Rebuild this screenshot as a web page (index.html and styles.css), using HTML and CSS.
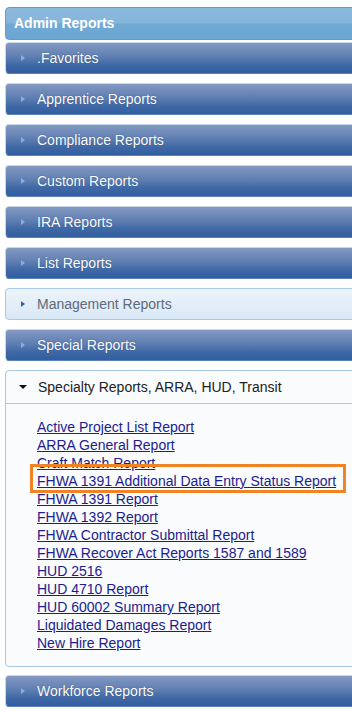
FILE: index.html
```html
<!DOCTYPE html>
<html lang="en">
  <head>
    <meta charset="UTF-8" />
    <meta name="viewport" content="width=device-width, initial-scale=1.0" />
    <title>Admin Reports</title>
    <link rel="stylesheet" href="styles.css">
  </head>
  <body>
    <!-- menu báo cáo -->
    <div class="menu">
      <div class="title">Admin Reports</div>
      <div class="list">
        <div class="bar"><span class="arrow"></span>.Favorites</div>
        <div class="bar"><span class="arrow"></span>Apprentice Reports</div>
        <div class="bar"><span class="arrow"></span>Compliance Reports</div>
        <div class="bar"><span class="arrow"></span>Custom Reports</div>
        <div class="bar"><span class="arrow"></span>IRA Reports</div>
        <div class="bar"><span class="arrow"></span>List Reports</div>
        <div class="bar light"><span class="arrow"></span>Management Reports</div>
        <div class="bar"><span class="arrow"></span>Special Reports</div>
        <div class="open">
          <div class="openHead"><span class="down"></span>Specialty Reports, ARRA, HUD, Transit</div>
          <div class="links">
            <a href="#">Active Project List Report</a>
            <a href="#">ARRA General Report</a>
            <a href="#">Craft Match Report</a>
            <span class="mark"><a href="#">FHWA 1391 Additional Data Entry Status Report</a></span>
            <a href="#">FHWA 1391 Report</a>
            <a href="#">FHWA 1392 Report</a>
            <a href="#">FHWA Contractor Submittal Report</a>
            <a href="#">FHWA Recover Act Reports 1587 and 1589</a>
            <a href="#">HUD 2516</a>
            <a href="#">HUD 4710 Report</a>
            <a href="#">HUD 60002 Summary Report</a>
            <a href="#">Liquidated Damages Report</a>
            <a href="#">New Hire Report</a>
          </div>
        </div>
        <div class="bar last"><span class="arrow"></span>Workforce Reports</div>
      </div>
    </div>
  </body>
</html>
```

FILE: styles.css
```css
html {
  overflow: hidden;
}
body {
  margin: 0;
  background: #fff;
  font-family: "Liberation Sans", Arial, sans-serif;
  font-size: 14px;
}
.menu {
  margin: 7px -12px 0 5px;
}
.title {
  box-sizing: border-box;
  height: 33px;
  padding-left: 8px;
  line-height: 31px;
  font-weight: bold;
  color: #fff;
  border: 1px solid #5e9dd0;
  border-radius: 4px;
  background: linear-gradient(to bottom, #8cbadd 0%, #85b5da 48%, #70a9d4 52%, #6aa5d2 100%);
}
.list {
  display: flex;
  flex-direction: column;
  gap: 9px;
  margin-top: 2px;
}
.bar {
  box-sizing: border-box;
  height: 32px;
  display: flex;
  align-items: center;
  padding-left: 15px;
  color: #fff;
  text-shadow: 0 0 1px rgba(20, 40, 90, 0.7);
  border: 1px solid #c9d8ea;
  border-bottom-color: #5b82b8;
  border-radius: 4px;
  background: linear-gradient(to bottom, #8399c2 0%, #5f7fb2 45%, #3e67a5 75%, #325e9f 100%);
}
.arrow {
  width: 0;
  height: 0;
  border-top: 3px solid transparent;
  border-bottom: 3px solid transparent;
  border-left: 4px solid #86b0de;
  margin-right: 12px;
}
.bar.light {
  color: #5d6b7c;
  text-shadow: none;
  border: 1px solid #a7c8e8;
  background: linear-gradient(to bottom, #edf4fb 0%, #e4eef8 50%, #d9e8f6 100%);
}
.bar.light .arrow {
  border-left-color: #2e64a8;
}
.bar.last {
  margin-top: -1px;
}
.open {
  border: 1px solid #a9c8e6;
  border-radius: 4px;
  background: #f9fbfd;
}
.openHead {
  box-sizing: border-box;
  height: 33px;
  display: flex;
  align-items: center;
  padding-left: 13px;
  color: #222;
  border-bottom: 1px solid #a9c8e6;
}
.down {
  width: 0;
  height: 0;
  border-left: 4px solid transparent;
  border-right: 4px solid transparent;
  border-top: 4px solid #111;
  margin-right: 11px;
}
.links {
  display: flex;
  flex-direction: column;
  align-items: flex-start;
  padding: 14px 0 14px 31px;
  line-height: 18px;
}
.links a {
  color: #221b8e;
  text-decoration: underline;
}
.mark {
  position: relative;
}
.mark::after {
  content: "";
  position: absolute;
  left: -7px;
  right: -10px;
  top: -8px;
  bottom: -3px;
  border: 3px solid #f08424;
}
```
